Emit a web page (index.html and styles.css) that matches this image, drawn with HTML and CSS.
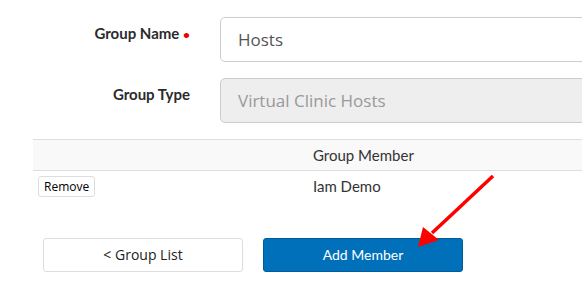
FILE: index.html
```html
<!DOCTYPE html>
<html lang="en">
<head>
<meta charset="UTF-8">
<meta name="viewport" content="width=device-width, initial-scale=1.0">
<title>Edit Group</title>
<link rel="stylesheet" href="styles.css">
</head>
<body>
<div class="page">
  <div class="form-row">
    <label class="form-label" for="groupName">Group Name <span class="required">&#8226;</span></label>
    <input type="text" id="groupName" class="form-input" value="Hosts">
  </div>
  <div class="form-row">
    <label class="form-label" for="groupType">Group Type</label>
    <input type="text" id="groupType" class="form-input" value="Virtual Clinic Hosts" disabled>
  </div>

  <table class="member-table">
    <thead>
      <tr>
        <th class="col-action"></th>
        <th>Group Member</th>
      </tr>
    </thead>
    <tbody>
      <tr>
        <td class="col-action"><button class="btn-remove">Remove</button></td>
        <td>Iam Demo</td>
      </tr>
    </tbody>
  </table>

  <div class="actions">
    <button class="btn btn-default">&lt; Group List</button>
    <button class="btn btn-primary">Add Member</button>
  </div>

  <svg class="arrow" width="100" height="90" viewBox="0 0 100 90">
    <line x1="93" y1="11" x2="32" y2="68" stroke="#f00" stroke-width="3.5"/>
    <polygon points="18,82 23,62 39,75" fill="#f00"/>
  </svg>
</div>
</body>
</html>
```

FILE: styles.css
```css
body {
  margin: 0;
  background: #fff;
  font-family: 'Lato', 'Open Sans', sans-serif;
  color: #333;
  overflow: hidden;
}
.page {
  position: relative;
  width: 660px;
  padding-top: 17px;
}
.form-row {
  display: flex;
  align-items: flex-start;
  margin-bottom: 16px;
}
.form-label {
  width: 190px;
  flex: none;
  text-align: right;
  padding-top: 7px;
  margin-right: 30px;
  font-size: 15px;
  line-height: 18px;
  font-weight: 700;
  color: #2b2b2b;
}
.required {
  color: #e00;
  font-size: 12px;
}
.form-input {
  flex: 1;
  height: 45px;
  box-sizing: border-box;
  border: 1px solid #ccc;
  border-radius: 5px;
  padding: 0 17px;
  font-family: 'Open Sans', sans-serif;
  font-size: 17px;
  color: #555;
  background: #fff;
}
.form-input:disabled {
  background: #eee;
  color: #999;
}
.member-table {
  margin-left: 33px;
  width: 627px;
  border-collapse: collapse;
  font-size: 15px;
  color: #333;
}
.member-table th {
  background: #f9f9f9;
  border-top: 1px solid #ddd;
  border-bottom: 1px solid #ddd;
  height: 30px;
  padding: 0 8px;
  text-align: left;
  font-weight: 400;
}
.member-table td {
  padding: 5px 8px;
  vertical-align: top;
  height: 58px;
  box-sizing: border-box;
}
.member-table tbody td:last-child {
  padding-top: 6px;
}
.member-table .col-action {
  width: 259px;
  padding-left: 5px;
}
.btn-remove {
  font-family: 'Open Sans', sans-serif;
  font-size: 12px;
  color: #000;
  background: #fff;
  border: 1px solid #ddd;
  border-radius: 3px;
  padding: 1px 5px;
  height: 21px;
}
.actions {
  display: flex;
  gap: 20px;
  padding-left: 43px;
  margin-top: 9px;
}
.btn {
  width: 200px;
  height: 34px;
  font-size: 14px;
  border-radius: 3px;
  cursor: pointer;
}
.btn-default {
  font-family: 'Open Sans', sans-serif;
  background: #fff;
  border: 1px solid #ddd;
  color: #222;
}
.btn-primary {
  font-family: 'Lato', sans-serif;
  background: #0070ba;
  border: 1px solid #005c9c;
  color: #fff;
}
.arrow {
  position: absolute;
  left: 400px;
  top: 165px;
}
```
